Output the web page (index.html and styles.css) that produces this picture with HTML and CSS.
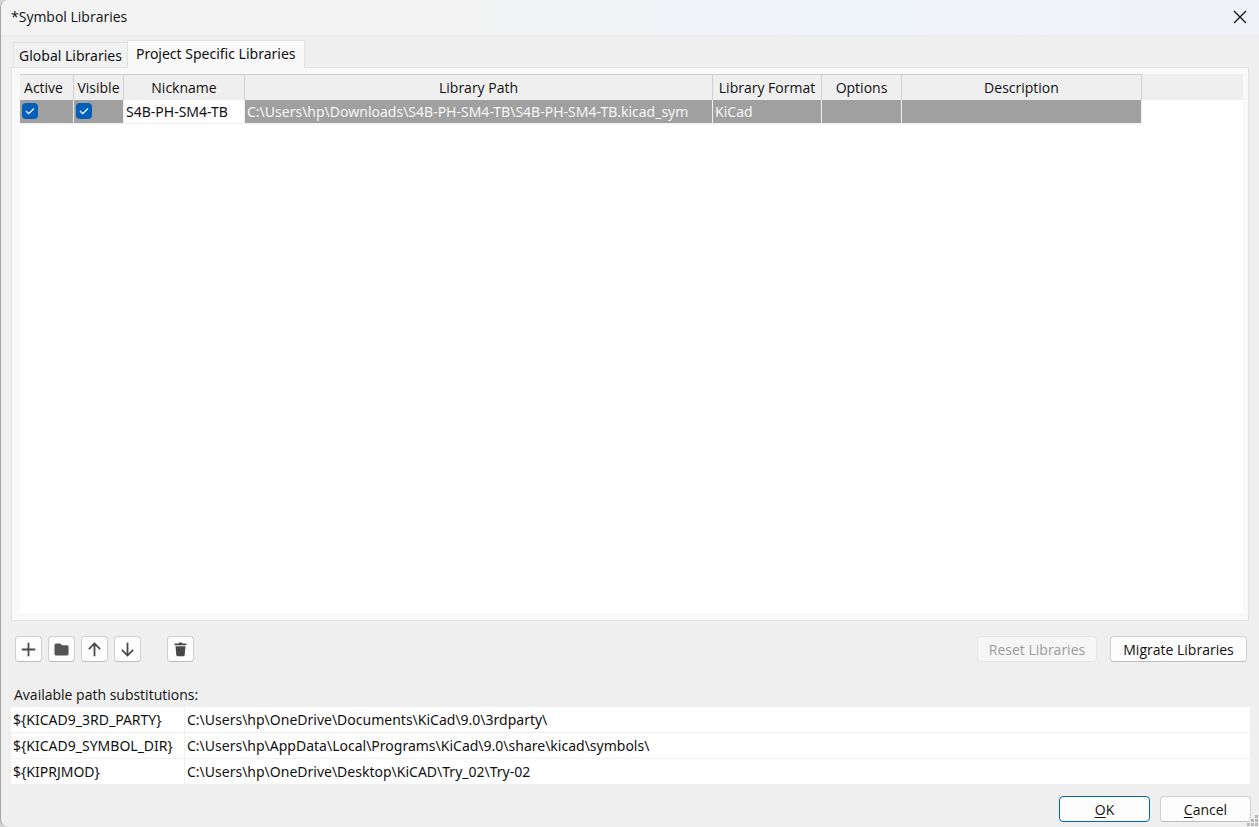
FILE: index.html
```html
<!DOCTYPE html>
<html lang="en">
<head>
<meta charset="utf-8">
<title>Symbol Libraries</title>
<link rel="stylesheet" href="styles.css">
</head>
<body>
<div class="dialog">
  <header class="titlebar">
    <h1 class="title">*Symbol Libraries</h1>
    <button class="close" type="button" aria-label="Close">
      <svg width="14" height="14" viewBox="0 0 14 14"><path d="M1 1l12 12M13 1L1 13" fill="none" stroke="#111" stroke-width="1.3"/></svg>
    </button>
  </header>

  <main class="content">
    <div class="tabs" role="tablist">
      <button class="tab" type="button" role="tab" aria-selected="false">Global Libraries</button>
      <button class="tab tab-active" type="button" role="tab" aria-selected="true">Project Specific Libraries</button>
    </div>
    <section class="panel" role="tabpanel">
      <div class="grid-area">
        <table class="grid">
          <colgroup>
            <col class="col-active"><col class="col-visible"><col class="col-nickname"><col class="col-path"><col class="col-format"><col class="col-options"><col class="col-description"><col>
          </colgroup>
          <thead>
            <tr><th>Active</th><th>Visible</th><th>Nickname</th><th>Library Path</th><th>Library Format</th><th>Options</th><th>Description</th><td class="filler"></td></tr>
          </thead>
          <tbody>
            <tr>
              <td class="selected"><input class="check" type="checkbox" aria-label="Active" checked></td>
              <td class="selected"><input class="check" type="checkbox" aria-label="Visible" checked></td>
              <td class="current">S4B-PH-SM4-TB</td>
              <td class="selected">C:\Users\hp\Downloads\S4B-PH-SM4-TB\S4B-PH-SM4-TB.kicad_sym</td>
              <td class="selected">KiCad</td>
              <td class="selected"></td>
              <td class="selected"></td>
              <td class="blank"></td>
            </tr>
          </tbody>
        </table>
      </div>
    </section>

    <div class="toolbar">
      <button class="button icon-button" type="button" aria-label="Add library">
        <svg width="15" height="15" viewBox="0 0 16 16"><path d="M8 .8v14.400M.8 8h14.400" fill="none" stroke="#484848" stroke-width="1.9"/></svg>
      </button>
      <button class="button icon-button" type="button" aria-label="Browse libraries">
        <svg width="15" height="15" viewBox="0 0 16 16"><path d="M2 1.500h4.700l2 2h5q1.800 0 1.800 1.500v7.500q0 2-2 2h-11Q.5 14.500.5 12.500v-9Q.5 1.500 2 1.500z" fill="#545454"/></svg>
      </button>
      <button class="button icon-button" type="button" aria-label="Move up">
        <svg width="15" height="15" viewBox="0 0 16 16"><path d="M8 15.200V2M2 7.500L8 1.500l6 6" fill="none" stroke="#484848" stroke-width="1.9"/></svg>
      </button>
      <button class="button icon-button" type="button" aria-label="Move down">
        <svg width="15" height="15" viewBox="0 0 16 16"><path d="M8 .8V14M2 8.500l6 6 6-6" fill="none" stroke="#484848" stroke-width="1.9"/></svg>
      </button>
      <button class="button icon-button delete" type="button" aria-label="Remove library">
        <svg width="15" height="15" viewBox="0 0 16 16"><path d="M1.700 1.500h4l1-1h2.600l1 1h4v2H1.700zM2.700 4.500h10.600l-.8 9.200q-.1 1.600-1.600 1.600H5.100q-1.500 0-1.600-1.600z" fill="#484848"/></svg>
      </button>
      <button class="button text-button reset" type="button" disabled>Reset Libraries</button>
      <button class="button text-button migrate" type="button">Migrate Libraries</button>
    </div>

    <table class="paths">
      <caption>Available path substitutions:</caption>
      <tbody>
        <tr><th scope="row">${KICAD9_3RD_PARTY}</th><td>C:\Users\hp\OneDrive\Documents\KiCad\9.0\3rdparty\</td></tr>
        <tr><th scope="row">${KICAD9_SYMBOL_DIR}</th><td>C:\Users\hp\AppData\Local\Programs\KiCad\9.0\share\kicad\symbols\</td></tr>
        <tr><th scope="row">${KIPRJMOD}</th><td>C:\Users\hp\OneDrive\Desktop\KiCAD\Try_02\Try-02</td></tr>
      </tbody>
    </table>
  </main>

  <footer class="footer">
    <button class="button text-button action primary" type="button"><u>O</u>K</button>
    <button class="button text-button action" type="button"><u>C</u>ancel</button>
  </footer>
  <svg class="grip" width="12" height="12" viewBox="0 0 12 12"><path d="M8 0h3v3H8zM8 4h3v3H8zM4 4h3v3H4zM8 8h3v3H8zM4 8h3v3H4zM0 8h3v3H0z" fill="#b9b9b9"/></svg>
</div>
</body>
</html>
```
FILE: styles.css
```css
* {
  box-sizing: border-box;
}

body {
  margin: 0;
  background: #d4d4d4;
  color: #111;
  font: 14px/20px "Open Sans", "Noto Sans", sans-serif;
}

button {
  font: inherit;
  color: inherit;
}

.dialog {
  position: relative;
  display: flex;
  flex-direction: column;
  min-height: 100vh;
  overflow: hidden;
  background: #efefef;
  border-left: 1px solid #a5a5a5;
  border-radius: 8px 0 0 8px;
}

.titlebar {
  display: flex;
  align-items: center;
  justify-content: space-between;
  height: 35px;
  padding: 0 8px 2px 10px;
  background: linear-gradient(90deg, #f3f3f3 0%, #f3f3f3 35%, #eff3fa 65%, #f0f2f8 100%);
}

.title {
  margin: 0;
  font-size: 14px;
  font-weight: 400;
}

.close {
  display: flex;
  padding: 4px;
  border: 0;
  background: none;
}

.content {
  display: flex;
  flex: 1;
  flex-direction: column;
  padding: 5px 9px 0 10px;
}

.tabs {
  display: flex;
  align-items: flex-end;
  padding-left: 2px;
}

.tab,
.grid tbody,
.paths tbody {
  font-family: "Noto Sans", "Open Sans", sans-serif;
}

.tab {
  height: 25px;
  padding: 1px 5px 0;
  border: 1px solid #e2e2e2;
  border-width: 1px 0 0 1px;
  background: #f2f2f2;
  white-space: nowrap;
}

.tab-active {
  z-index: 1;
  height: 28px;
  margin-bottom: -1px;
  padding: 0 8px 2px;
  border-width: 1px 1px 0;
  background: #f9f9f9;
}

.panel {
  display: flex;
  flex: 1;
  margin-right: 1px;
  padding: 6px 5px 7px 8px;
  border: 1px solid #e2e2e2;
  background: #f9f9f9;
}

.grid-area {
  flex: 1;
  background: #fff;
}

.grid {
  width: 100%;
  border-collapse: separate;
  border-spacing: 0;
  table-layout: fixed;
}

.col-active { width: 54px; }
.col-visible { width: 50px; }
.col-nickname { width: 121px; }
.col-path { width: 468px; }
.col-format { width: 109px; }
.col-options { width: 80px; }
.col-description { width: 240px; }

.grid th,
.grid td {
  overflow: hidden;
  white-space: nowrap;
}

.grid th {
  height: 26px;
  padding: 0;
  border-top: 1px solid #cfcfcf;
  border-right: 1px solid #cfcfcf;
  background: #efefef;
  font-weight: 400;
}

.grid th:first-child {
  padding-right: 6px;
}

.grid .filler {
  background: #efefef;
}

.grid tbody td {
  height: 24px;
  padding: 0 2px;
  border-right: 1px solid #f0f0f0;
  border-bottom: 1px solid #f0f0f0;
}

.grid .selected {
  background: #a0a0a0;
  color: #f6f6f6;
}

.grid .blank {
  border: 0;
}

.check {
  display: block;
  width: 16px;
  height: 16px;
  margin: 0 0 2px;
  border-radius: 4px;
  appearance: none;
  background: #005fb8 url("data:image/svg+xml,%3Csvg xmlns='http://www.w3.org/2000/svg' viewBox='0 0 16 16'%3E%3Cpath d='M4 8l2.700 2.700L12 5.500' fill='none' stroke='white' stroke-width='1.2'/%3E%3C/svg%3E");
}

.toolbar {
  display: flex;
  gap: 6px;
  padding: 15px 3px 0 4px;
}

.button {
  display: flex;
  align-items: center;
  justify-content: center;
  height: 26px;
  padding: 0;
  border: 1px solid #d0d0d0;
  border-bottom-color: #bcbcbc;
  border-radius: 4px;
  background: #fdfdfd;
  white-space: nowrap;
}

.icon-button {
  width: 27px;
}

.text-button {
  padding-top: 2px;
}

.delete {
  margin-left: 20px;
}

.reset {
  width: 120px;
  margin-left: auto;
  border-color: #e6e6e6;
  background: #f6f6f6;
  color: #9b9b9b;
}

.migrate {
  width: 137px;
  margin-left: 7px;
}

.paths {
  width: 100%;
  margin-top: 22px;
  border-collapse: separate;
  border-spacing: 0;
  background: #fff;
}

.paths caption {
  height: 23px;
  padding: 1px 3px 0;
  background: #efefef;
  text-align: left;
}

.paths th,
.paths td {
  height: 26px;
  padding: 0 2px;
  border-bottom: 1px solid #efefef;
  font-weight: 400;
  text-align: left;
}

.paths th {
  width: 174px;
  border-right: 1px solid #efefef;
  white-space: nowrap;
}

.paths tr:last-child > * {
  height: 25px;
  border-bottom: 0;
}

.footer {
  display: flex;
  justify-content: flex-end;
  gap: 10px;
  padding: 12px 8px 5px;
}

.action {
  width: 91px;
}

.action u {
  text-underline-offset: 2px;
}

.primary {
  border-color: #0067b8;
}

.grip {
  position: absolute;
  right: 0;
  bottom: 0;
}
```
